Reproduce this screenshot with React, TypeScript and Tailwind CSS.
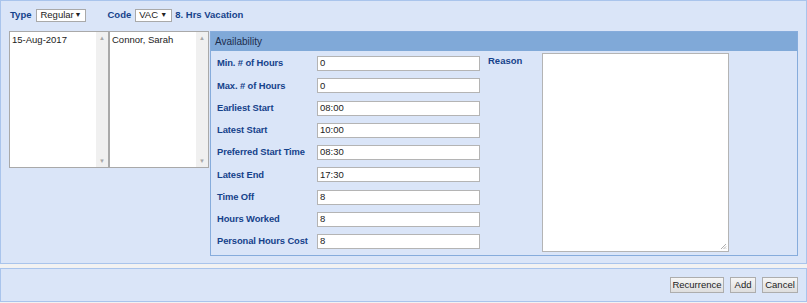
import React from 'react';

const rows = [
  { label: 'Min. # of Hours', value: '0' },
  { label: 'Max. # of Hours', value: '0' },
  { label: 'Earliest Start', value: '08:00' },
  { label: 'Latest Start', value: '10:00' },
  { label: 'Preferred Start Time', value: '08:30' },
  { label: 'Latest End', value: '17:30' },
  { label: 'Time Off', value: '8' },
  { label: 'Hours Worked', value: '8' },
  { label: 'Personal Hours Cost', value: '8' },
];

const ListBox = ({ text }: { text: string }) => (
  <div className="flex h-[137px] w-[100px] border border-[#a9a9a9] bg-white">
    <div className="flex-1 pl-[2px] pt-[1px] text-[9.5px] text-[#222]">{text}</div>
    <div className="flex w-[12px] flex-col justify-between bg-[#f0f0f0] py-[3px] text-center text-[6px] leading-none text-[#a8a8a8]">
      <span>▲</span>
      <span>▼</span>
    </div>
  </div>
);

const Select = ({ value, width }: { value: string; width: string }) => (
  <div className={`flex h-[13px] ${width} items-center justify-between border border-[#a9a9a9] bg-white pl-[3px] pr-[4px] text-[9.5px] font-normal text-[#222]`}>
    <span>{value}</span>
    <span className="text-[7px]">▼</span>
  </div>
);

const Button = ({ children, width }: { children: React.ReactNode; width: string }) => (
  <button className={`h-[16px] ${width} border border-[#adadad] bg-gradient-to-b from-[#f6f6f6] to-[#dedede] text-[9.5px] text-[#222]`}>
    {children}
  </button>
);

export default function App() {
  return (
    <div className="h-[303px] w-[807px] bg-[#f2f2f2] font-['Liberation_Sans',Arial,sans-serif]">
      <div className="h-[264px] border border-[#a9c4ec] bg-[#dae5f8] pl-[8px] pr-[8px]">
        <div className="flex h-[30px] items-center pb-[2px] text-[9.5px] font-bold text-[#15428b]">
          <span className="ml-[1px] mr-[5px]">Type</span>
          <Select value="Regular" width="w-[50px]" />
          <span className="ml-[21px] mr-[4px]">Code</span>
          <Select value="VAC" width="w-[37px]" />
          <span className="ml-[3px]">8. Hrs Vacation</span>
        </div>
        <div className="flex">
          <ListBox text="15-Aug-2017" />
          <ListBox text="Connor, Sarah" />
          <div className="ml-[1px] h-[225px] flex-1 border border-[#86acdc] bg-[#dae5f8]">
            <div className="flex h-[19px] items-center bg-[#80a9d8] pl-[4px] text-[10px] text-[#1b2c4c]">Availability</div>
            <div className="flex pl-[6px] pt-[5px]">
              <div className="flex flex-col gap-[7.25px]">
                {rows.map((r) => (
                  <div key={r.label} className="flex h-[15px] items-center">
                    <span className="w-[100px] text-[9.4px] font-bold tracking-[-0.1px] text-[#15428b]">{r.label}</span>
                    <div className="flex h-[15px] w-[163px] items-center border border-[#b4b4b4] bg-white pl-[2px] text-[9.5px] text-[#222]">
                      {r.value}
                    </div>
                  </div>
                ))}
              </div>
              <span className="ml-[8px] mt-[-2px] w-[54px] text-[9.5px] font-bold text-[#15428b]">Reason</span>
              <div className="relative mt-[-3px] h-[199px] w-[187px] border border-[#b4b4b4] bg-white">
                <svg className="absolute bottom-[1px] right-[1px]" width="7" height="7" viewBox="0 0 7 7">
                  <path d="M6 1L1 6M6 3.5L3.5 6M6 5.5L5.5 6" stroke="#9a9a9a" strokeWidth="0.8" />
                </svg>
              </div>
            </div>
          </div>
        </div>
      </div>
      <div className="mt-[4px] flex h-[34px] items-center justify-end gap-[6px] border border-[#a9c4ec] bg-[#dae5f8] pr-[8px]">
        <Button width="w-[54px]">Recurrence</Button>
        <Button width="w-[26px]">Add</Button>
        <Button width="w-[36px]">Cancel</Button>
      </div>
    </div>
  );
}
